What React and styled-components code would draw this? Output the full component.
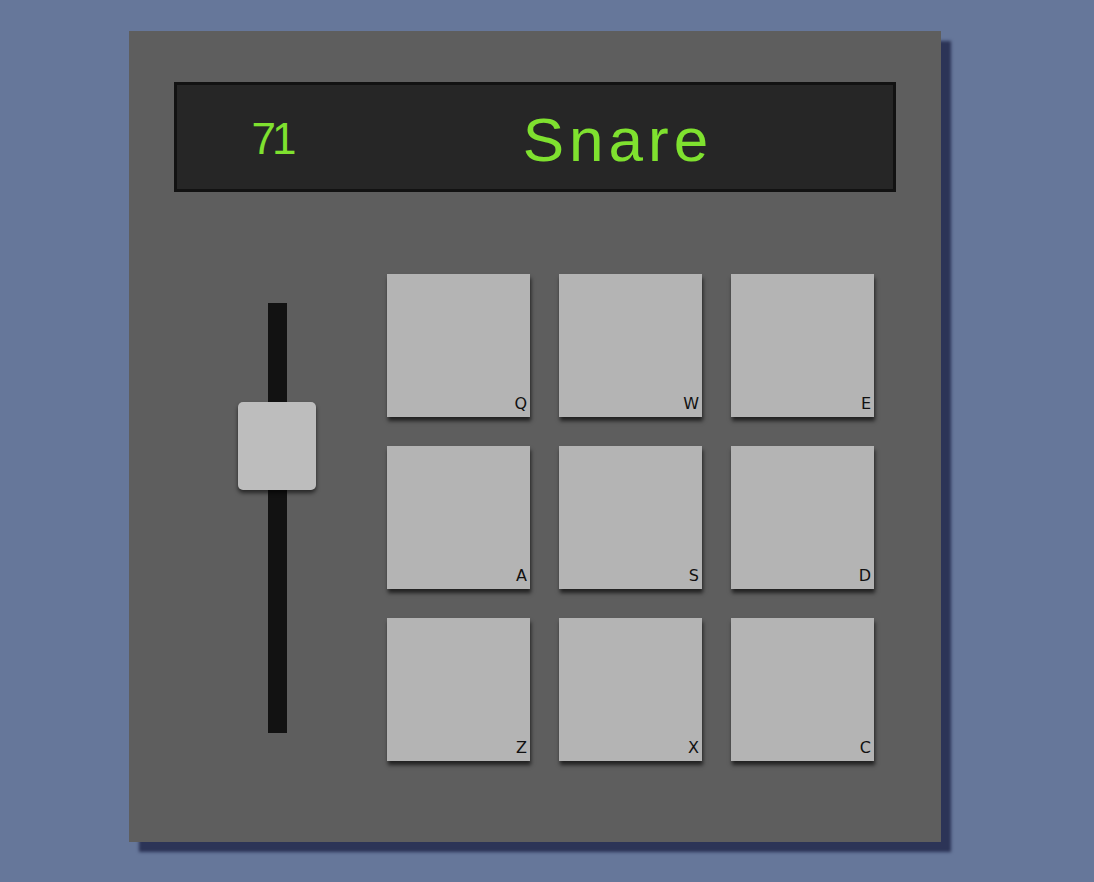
import styled, { createGlobalStyle } from 'styled-components';

const GlobalStyle = createGlobalStyle`
  html, body {
    margin: 0;
    padding: 0;
    background: #66779a;
    font-family: "Liberation Sans", Arial, sans-serif;
  }
`;

const Page = styled.div`
  width: 1094px;
  height: 882px;
  padding: 31px 0 0 129px;
  box-sizing: border-box;
`;

const Machine = styled.div`
  width: 812px;
  height: 811px;
  box-sizing: border-box;
  padding: 51px 45px;
  background: #5e5e5e;
  box-shadow: 10px 10px 3px #2c3457;
`;

const Display = styled.div`
  height: 110px;
  box-sizing: border-box;
  border: 3px solid #121212;
  background: #262626;
  display: grid;
  grid-template-columns: 194px 1fr;
  align-items: center;
  padding: 4px 28px 0 0;
  color: #7fe12f;
`;

const Volume = styled.div`
  text-align: center;
  font-size: 44px;
  letter-spacing: -4px;
  padding-right: 4px;
`;

const Sound = styled.div`
  text-align: center;
  font-size: 62px;
  letter-spacing: 5px;
`;

const Body = styled.div`
  margin-top: 82px;
  display: flex;
  align-items: center;
`;

const SliderCol = styled.div`
  width: 207px;
  margin-right: 6px;
  display: flex;
  justify-content: center;
`;

const Track = styled.div`
  position: relative;
  width: 19px;
  height: 430px;
  background: #121212;
`;

const Thumb = styled.div`
  position: absolute;
  left: -30px;
  width: 78px;
  height: 88px;
  border-radius: 5px;
  background: #bdbdbd;
  box-shadow: 0 3px 4px rgba(0, 0, 0, 0.6);
`;

const Pads = styled.div`
  display: grid;
  grid-template-columns: repeat(3, 143px);
  grid-auto-rows: 143px;
  gap: 29px;
`;

const Pad = styled.button`
  border: none;
  padding: 0 3px 4px 0;
  margin: 0;
  background: ${p => (p.$active ? '#9c9c9c' : '#b4b4b4')};
  box-shadow: 1px 4px 4px rgba(0, 0, 0, 0.65);
  display: flex;
  align-items: flex-end;
  justify-content: flex-end;
  font-family: "DejaVu Sans", sans-serif;
  font-size: 16px;
  font-weight: 500;
  color: #111;
  cursor: pointer;
`;

const keys = ['Q', 'W', 'E', 'A', 'S', 'D', 'Z', 'X', 'C'];

export default function App() {
  const volume = 71;
  return (
    <Page>
      <GlobalStyle />
      <Machine>
        <Display>
          <Volume>{volume}</Volume>
          <Sound>Snare</Sound>
        </Display>
        <Body>
          <SliderCol>
            <Track>
              <Thumb style={{ top: 99 }} />
            </Track>
          </SliderCol>
          <Pads>
            {keys.map(k => (
              <Pad key={k}>{k}</Pad>
            ))}
          </Pads>
        </Body>
      </Machine>
    </Page>
  );
}
